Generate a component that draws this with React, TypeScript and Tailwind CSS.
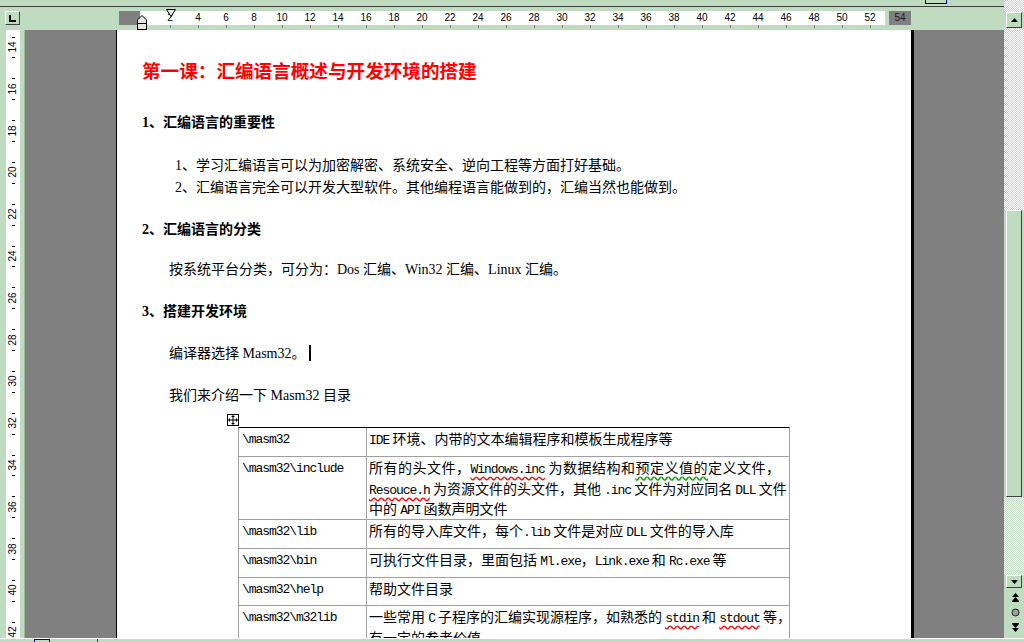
import React from 'react';

const hNums = Array.from({ length: 26 }, (_, i) => (i + 1) * 2);
const vNums = Array.from({ length: 15 }, (_, i) => 14 + i * 2);
const vTicks = Array.from({ length: 30 }, (_, i) => 13.5 + i);

const bevel =
  'bg-[#c0dcc0] border border-t-white border-l-white border-r-[#404040] border-b-[#404040]';
const checker =
  'bg-[image:repeating-conic-gradient(#c0dcc0_0%_25%,#ffffff_0%_50%)] bg-[length:2px_2px]';

const M: React.FC<{ children: React.ReactNode; wavy?: 'red' | 'green' }> = ({ children, wavy }) => {
  let cls = "font-['Liberation_Mono',monospace] text-[13px] tracking-[-1.05px] leading-none";
  if (wavy === 'red') cls += ' underline decoration-wavy decoration-[#ff0000] underline-offset-[3px]';
  return <span className={cls}>{children}</span>;
};

const Green: React.FC<{ children: React.ReactNode }> = ({ children }) => (
  <span className="underline decoration-wavy decoration-[#00a000] underline-offset-[3px]">{children}</span>
);

function TopRuler() {
  return (
    <div className="relative h-[22px] bg-[#c0dcc0] font-['Liberation_Sans',sans-serif]">
      <div className={`absolute left-[5px] top-[3px] w-[15px] h-[14px] ${bevel} flex items-center justify-center`}>
        <svg width="7" height="7" viewBox="0 0 7 7">
          <path d="M1 0v6h6" stroke="black" strokeWidth="2" fill="none" />
        </svg>
      </div>
      <div className="absolute left-[119px] top-[3px] w-[21px] h-[14px] bg-[#808080]" />
      <div className="absolute left-[140px] top-[3px] w-[745px] h-[14px] bg-white" />
      <div className="absolute left-[889px] top-[3px] w-[22px] h-[14px] bg-[#808080] text-[10px] leading-[14px] text-center text-[#202020]">
        54
      </div>
      {hNums.map((n) => (
        <React.Fragment key={n}>
          <span
            className="absolute top-[3px] -translate-x-1/2 text-[10px] leading-[14px] text-black"
            style={{ left: 142 + n * 14 }}
          >
            {n}
          </span>
          <span className="absolute top-[17px] w-[1px] h-[3px] bg-[#808080]" style={{ left: 142 + n * 14 }} />
        </React.Fragment>
      ))}
      <svg className="absolute left-[166px] top-[1px]" width="10" height="8" viewBox="0 0 10 8">
        <polygon points="0.5,0.5 9.5,0.5 5,7.5" fill="#e8e8e8" stroke="black" />
      </svg>
      <svg className="absolute left-[137px] top-[7px]" width="10" height="15" viewBox="0 0 10 15">
        <polygon points="5,0.5 9.5,5 9.5,8.5 0.5,8.5 0.5,5" fill="#e8e8e8" stroke="black" />
        <rect x="0.5" y="8.5" width="9" height="6" fill="#e8e8e8" stroke="black" />
      </svg>
    </div>
  );
}

function SideRuler() {
  return (
    <div className="relative w-[25px] shrink-0 bg-[#c0dcc0] border-r border-[#a0b8a0] font-['Liberation_Sans',sans-serif]">
      <div className="absolute left-[6px] top-0 bottom-0 w-[14px] bg-white" />
      {vNums.map((n) => (
        <span
          key={n}
          className="absolute left-[13px] -translate-x-1/2 -translate-y-1/2 -rotate-90 text-[10px] leading-none text-black"
          style={{ top: 17 + (n - 14) * 20.9 }}
        >
          {n}
        </span>
      ))}
      {vTicks.map((t) => (
        <span key={t} className="absolute left-[12px] w-[3px] h-[1px] bg-black" style={{ top: 17 + (t - 14) * 20.9 }} />
      ))}
    </div>
  );
}

function ScrollBar() {
  return (
    <div className="w-[20px] shrink-0 flex flex-col bg-[#c0dcc0]">
      <div className={`h-[12px] ${checker}`} />
      <div className={`h-[16px] w-[16px] ml-[2px] ${bevel} flex items-center justify-center`}>
        <svg width="7" height="4" viewBox="0 0 7 4">
          <polygon points="0,4 7,4 3.5,0" fill="black" />
        </svg>
      </div>
      <div className={`h-[182px] ${checker}`} />
      <div className={`h-[287px] w-[16px] ml-[2px] ${bevel}`} />
      <div className={`h-[78px] ${checker}`} />
      <div className={`h-[13px] w-[16px] ml-[2px] ${bevel} flex items-center justify-center`}>
        <svg width="7" height="4" viewBox="0 0 7 4">
          <polygon points="0,0 7,0 3.5,4" fill="black" />
        </svg>
      </div>
      <div className="flex flex-col items-center pl-[2px] pt-[5px] gap-[6px]">
        <svg width="7" height="9" viewBox="0 0 7 9">
          <polygon points="0,4 7,4 3.5,0" fill="black" />
          <polygon points="0,8 7,8 3.5,4" fill="black" />
          <rect x="0" y="8" width="7" height="1" fill="black" />
        </svg>
        <svg width="9" height="9" viewBox="0 0 9 9">
          <circle cx="4.5" cy="4.5" r="3.5" fill="#a0a0a0" stroke="#202020" />
        </svg>
        <svg width="7" height="9" viewBox="0 0 7 9">
          <rect x="0" y="0" width="7" height="1" fill="black" />
          <polygon points="0,1 7,1 3.5,5" fill="black" />
          <polygon points="0,5 7,5 3.5,9" fill="black" />
        </svg>
      </div>
    </div>
  );
}

function MoveHandle() {
  return (
    <div className="absolute left-[-11px] top-[-13px] w-[12px] h-[12px] border border-black bg-white flex items-center justify-center">
      <svg width="10" height="10" viewBox="0 0 10 10">
        <path d="M5 1v8M1 5h8" stroke="black" strokeWidth="1" />
        <polygon points="5,0 3,2 7,2" fill="black" />
        <polygon points="5,10 3,8 7,8" fill="black" />
        <polygon points="0,5 2,3 2,7" fill="black" />
        <polygon points="10,5 8,3 8,7" fill="black" />
      </svg>
    </div>
  );
}

const rows: { path: string; h: string; body: React.ReactNode }[] = [
  {
    path: '\\masm32',
    h: 'h-[29px]',
    body: (
      <>
        <M>IDE</M> 环境、内带的文本编辑程序和模板生成程序等
      </>
    ),
  },
  {
    path: '\\masm32\\include',
    h: 'h-[63px]',
    body: (
      <>
        <div className="[text-align-last:justify] pr-[8px]">
          所有的头文件，<M wavy="red">Windows.inc</M> 为数据结构和<Green>预定义值的</Green>定义文件，
        </div>
        <div>
          <M wavy="red">Resouce.h</M> 为资源文件的头文件，其他 <M>.inc</M> 文件为对应同名 <M>DLL</M> 文件
        </div>
        <div>
          中的 <M>API</M> 函数声明文件
        </div>
      </>
    ),
  },
  {
    path: '\\masm32\\lib',
    h: 'h-[29px]',
    body: (
      <>
        所有的导入库文件，每个<M>.lib</M> 文件是对应 <M>DLL</M> 文件的导入库
      </>
    ),
  },
  {
    path: '\\masm32\\bin',
    h: 'h-[29px]',
    body: (
      <>
        可执行文件目录，里面包括 <M>Ml.exe</M>，<M>Link.exe</M> 和 <M>Rc.exe</M> 等
      </>
    ),
  },
  { path: '\\masm32\\help', h: 'h-[28px]', body: <>帮助文件目录</> },
  {
    path: '\\masm32\\m32lib',
    h: 'h-[60px]',
    body: (
      <>
        <div>
          一些常用 <M>C</M> 子程序的汇编实现源程序，如熟悉的 <M wavy="red">stdin</M> 和 <M wavy="red">stdout</M> 等，
        </div>
        <div>有一定的参考价值</div>
      </>
    ),
  },
];

function DirTable() {
  return (
    <div className="relative ml-[96px] mt-[20px] w-[552px]">
      <MoveHandle />
      <div className="border-t border-t-black border-x border-x-[#a0a0a0]">
        {rows.map((r) => (
          <div key={r.path} className={`flex border-b border-[#a0a0a0] ${r.h}`}>
            <div className="w-[128px] shrink-0 border-r border-[#a0a0a0] pl-[3px] leading-[20.5px]">
              <M>{r.path}</M>
            </div>
            <div className="flex-1 pl-[2px] pr-[1px] text-[14px] leading-[20.5px] whitespace-nowrap font-['Noto_Sans_CJK_SC',sans-serif]">
              {r.body}
            </div>
          </div>
        ))}
      </div>
    </div>
  );
}

function Page() {
  return (
    <div className="w-[795px] shrink-0 bg-white border-l border-black pt-[30px] pl-[25px] overflow-hidden text-black font-['Liberation_Serif','Noto_Sans_CJK_SC',serif]">
      <h1 className="text-[18.6px] leading-[24px] font-bold text-[#ff0000]">
        第一课：汇编语言概述与开发环境的搭建
      </h1>
      <h2 className="mt-[28px] text-[14px] leading-[22px] font-bold">1、汇编语言的重要性</h2>
      <div className="mt-[21px] pl-[33px] text-[14px] leading-[22px]">
        <p>1、学习汇编语言可以为加密解密、系统安全、逆向工程等方面打好基础。</p>
        <p>2、汇编语言完全可以开发大型软件。其他编程语言能做到的，汇编当然也能做到。</p>
      </div>
      <h2 className="mt-[20px] text-[14px] leading-[22px] font-bold">2、汇编语言的分类</h2>
      <p className="mt-[18px] pl-[27px] text-[14px] leading-[22px]">
        按系统平台分类，可分为：Dos 汇编、Win32 汇编、Linux 汇编。
      </p>
      <h2 className="mt-[20px] text-[14px] leading-[22px] font-bold">3、搭建开发环境</h2>
      <p className="mt-[20px] pl-[27px] text-[14px] leading-[22px]">
        编译器选择 Masm32。
        <span className="inline-block w-[2px] h-[16px] bg-black ml-[3px] align-[-3px]" />
      </p>
      <p className="mt-[20px] pl-[27px] text-[14px] leading-[22px]">我们来介绍一下 Masm32 目录</p>
      <DirTable />
    </div>
  );
}

export default function App() {
  return (
    <div className="w-[1024px] h-[642px] overflow-hidden bg-[#c0dcc0] flex flex-col">
      <div className="flex h-[638px]">
        <div className="w-[1004px] flex flex-col">
          <div className="h-[6px] bg-[#c0dcc0] flex">
            <div className="ml-[925px] w-[22px] h-[4px] border border-t-0 border-[#000080]" />
          </div>
          <div className="h-[1px] bg-[#404040]" />
          <div className="h-[1px] bg-[#c0dcc0]" />
          <TopRuler />
          <div className="flex flex-1 min-h-0 overflow-hidden">
            <SideRuler />
            <div className="w-[91px] shrink-0 bg-[#808080]" />
            <Page />
            <div className="w-[3px] shrink-0 bg-black" />
            <div className="flex-1 bg-[#808080]" />
          </div>
        </div>
        <ScrollBar />
      </div>
      <div className="h-[4px] border-t border-white flex">
        <div className="ml-[34px] w-[16px] h-[3px] border border-b-0 border-[#000080]" />
        <div className="ml-[47px] w-[1px] h-[3px] bg-[#404040]" />
      </div>
    </div>
  );
}
